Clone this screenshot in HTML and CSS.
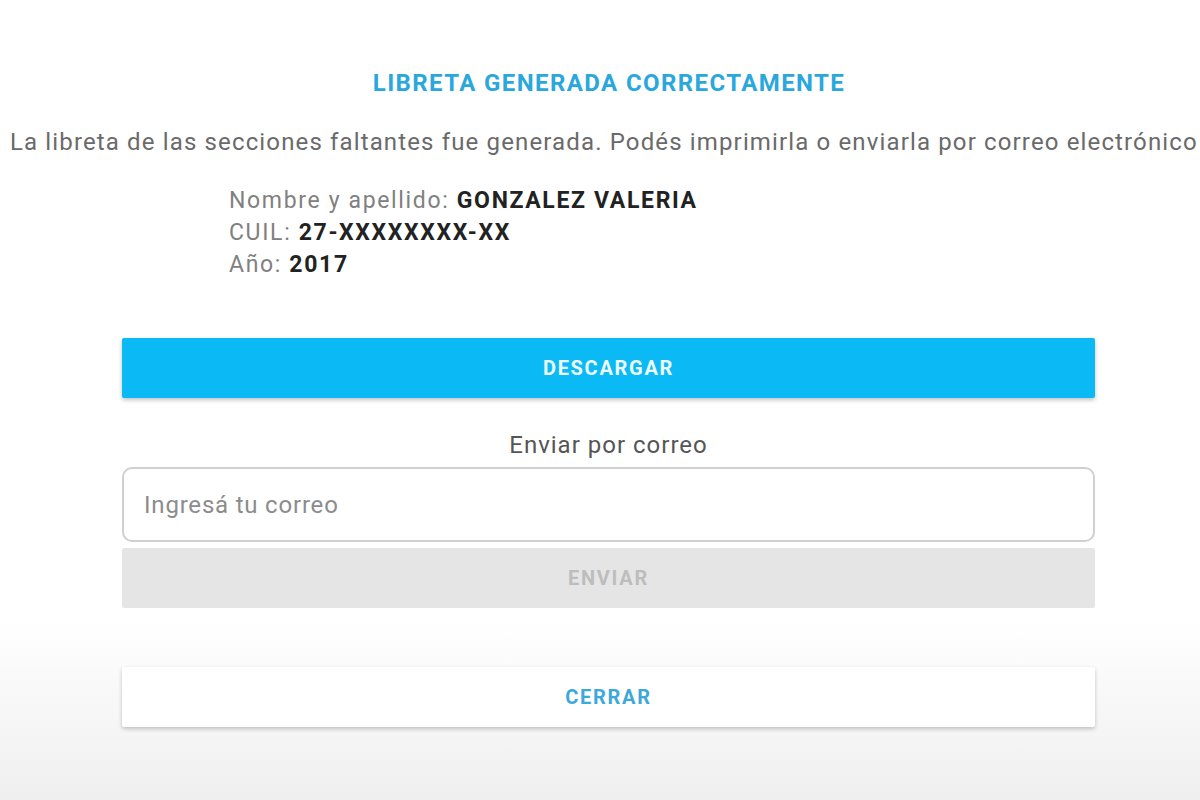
FILE: index.html
```html
<html>
<head>
	<link rel="stylesheet" href="styles.css">
	<title>Libreta generada</title>
</head>
<body>
	<div id="panel">
		<h1 class="title">LIBRETA GENERADA CORRECTAMENTE</h1>
		<p class="desc">La libreta de las secciones faltantes fue generada. Podés imprimirla o enviarla por correo electrónico</p>

		<div class="info">
			<div>Nombre y apellido: <b>GONZALEZ VALERIA</b></div>
			<div>CUIL: <b>27-XXXXXXXX-XX</b></div>
			<div>Año: <b>2017</b></div>
		</div>

		<div class="actions">
			<button class="btn btn-main">DESCARGAR</button>
			<div class="sendlabel">Enviar por correo</div>
			<input class="mailinput" placeholder="Ingresá tu correo"/>
			<button class="btn btn-off" disabled>ENVIAR</button>
			<button class="btn btn-close">CERRAR</button>
		</div>
	</div>
</body>
</html>
```

FILE: styles.css
```css
html{
	background: linear-gradient(to bottom, #ffffff 0px, #ffffff 620px, #efefef 800px);
	min-height: 100%;
}
body{
	margin: 0;
	font-family: Roboto, 'Liberation Sans', sans-serif;
}
#panel{
	padding-top: 67px;
}
.title{
	margin: 0;
	text-align: center;
	font-size: 24px;
	font-weight: bold;
	letter-spacing: 1.4px;
	color: #2aa7dd;
	padding-left: 18px;
	line-height: 32px;
}
.desc{
	margin: 28px 0 0 0;
	white-space: nowrap;
	font-size: 24px;
	letter-spacing: 1.14px;
	color: #6a6a6a;
	padding-left: 10px;
	line-height: 30px;
}
.info{
	margin: 28px 0 0 229px;
	font-size: 23px;
	letter-spacing: 1.65px;
	line-height: 32px;
	color: #808080;
}
.info b{
	color: #222;
}
.actions{
	margin: 57px 0 0 122px;
	width: 973px;
	display: flex;
	flex-direction: column;
}
.btn{
	height: 60px;
	border: 0;
	border-radius: 2px;
	font-family: Roboto, 'Liberation Sans', sans-serif;
	font-size: 20px;
	letter-spacing: 1.7px;
	font-weight: bold;
}
.btn-main{
	background-color: #0bbaf5;
	color: #eefaff;
	box-shadow: 0px 2px 4px rgba(0,0,0,0.25);
}
.sendlabel{
	margin-top: 31px;
	text-align: center;
	font-size: 24px;
	letter-spacing: 1px;
	color: #555;
	line-height: 32px;
}
.mailinput{
	margin-top: 6px;
	height: 75px;
	border: 2px solid #d0d0d0;
	border-radius: 10px;
	padding: 0 20px;
	font-family: Roboto, 'Liberation Sans', sans-serif;
	font-size: 24px;
	letter-spacing: 0.8px;
	background: #fff;
}
.mailinput::placeholder{
	color: #8c8c8c;
}
.btn-off{
	margin-top: 6px;
	background-color: #e5e5e5;
	color: #bdbdbd;
}
.btn-close{
	margin-top: 59px;
	background-color: #fff;
	color: #3da8da;
	box-shadow: 0px 2px 4px rgba(0,0,0,0.22);
}
```
